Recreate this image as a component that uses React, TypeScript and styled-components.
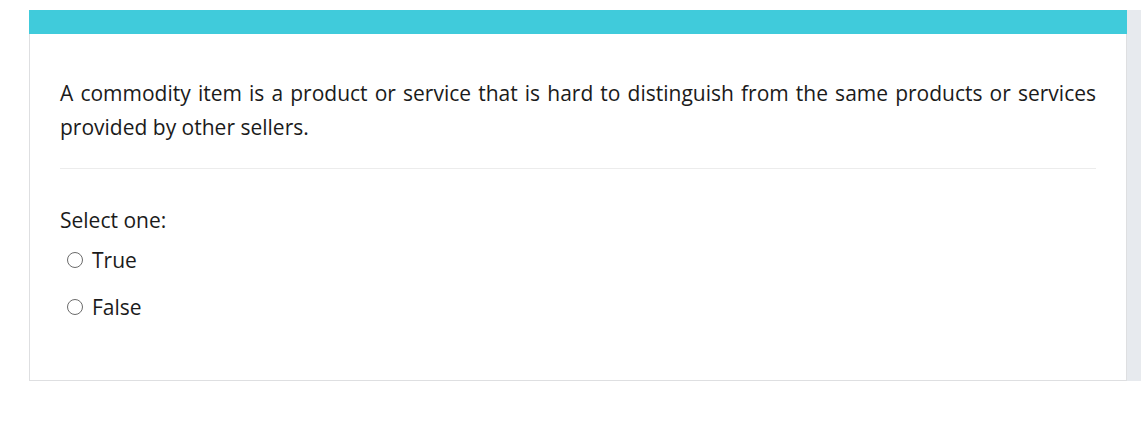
import React, { useState } from 'react';
import styled, { createGlobalStyle } from 'styled-components';

const GlobalStyle = createGlobalStyle`
  html, body {
    margin: 0;
    padding: 0;
    background: #ffffff;
  }
  body {
    font-family: 'Open Sans', 'Noto Sans', 'Liberation Sans', sans-serif;
    color: #1b1b1b;
  }
`;

const Page = styled.div`
  display: flex;
  align-items: stretch;
  padding: 10px 0 0 29px;
`;

const QuestionCard = styled.section`
  width: 1098px;
  display: flex;
  flex-direction: column;
  background: #ffffff;
`;

const CardHeader = styled.div`
  height: 24px;
  background: #40cbdb;
`;

const CardBody = styled.div`
  border: 1px solid #dedfe1;
  border-top: none;
  padding: 42px 30px 56px 30px;
`;

const QuestionText = styled.p`
  margin: 0;
  font-size: 21px;
  line-height: 34px;
  text-align: justify;
`;

const Divider = styled.hr`
  border: none;
  border-top: 1px solid #ececec;
  margin: 24px 0 34px 0;
`;

const Prompt = styled.div`
  font-size: 21px;
  line-height: 34px;
`;

const Options = styled.div`
  display: flex;
  flex-direction: column;
  gap: 13px;
  margin-top: 6px;
`;

const OptionRow = styled.label`
  display: flex;
  align-items: center;
  gap: 9px;
  padding-left: 7px;
  font-size: 21px;
  line-height: 34px;
  cursor: pointer;
`;

const RadioDot = styled.span<{ $checked: boolean }>`
  width: 16px;
  height: 16px;
  box-sizing: border-box;
  border-radius: 50%;
  border: 1px solid #6b6b6b;
  background: #ffffff;
  display: flex;
  align-items: center;
  justify-content: center;
  &::after {
    content: '';
    width: 8px;
    height: 8px;
    border-radius: 50%;
    background: ${(p) => (p.$checked ? '#1b6ef3' : 'transparent')};
  }
`;

const SideTrack = styled.div`
  flex: 1;
  background: #e7eaee;
`;

const options = ['True', 'False'];

export default function App() {
  const [selected, setSelected] = useState<string | null>(null);

  return (
    <>
      <GlobalStyle />
      <Page>
        <QuestionCard>
          <CardHeader />
          <CardBody>
            <QuestionText>
              A commodity item is a product or service that is hard to distinguish from the same products or
              services provided by other sellers.
            </QuestionText>
            <Divider />
            <Prompt>Select one:</Prompt>
            <Options>
              {options.map((opt) => (
                <OptionRow key={opt} onClick={() => setSelected(opt)}>
                  <RadioDot $checked={selected === opt} />
                  {opt}
                </OptionRow>
              ))}
            </Options>
          </CardBody>
        </QuestionCard>
        <SideTrack />
      </Page>
    </>
  );
}
